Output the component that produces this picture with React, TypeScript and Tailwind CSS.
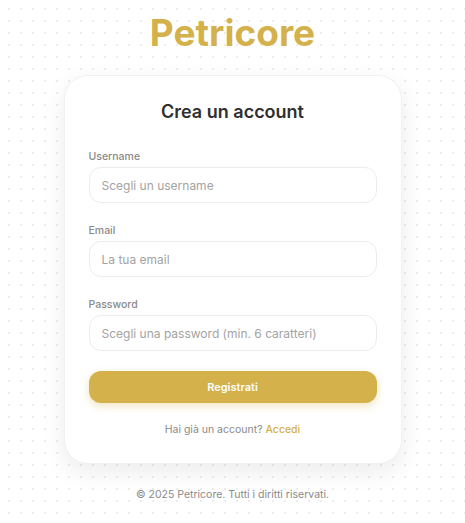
import React from 'react';

const Field = ({ label, type, placeholder }: { label: string; type: string; placeholder: string }) => (
  <div className="flex flex-col">
    <label className="mb-[2px] text-[10.5px] font-medium leading-4 text-[#8a8a8a]">{label}</label>
    <input
      type={type}
      placeholder={placeholder}
      className="h-9 rounded-xl border border-[#ececec] bg-white px-3 text-[12px] text-[#333] outline-none placeholder:text-[#a3a3a3]"
    />
  </div>
);

export default function App() {
  return (
    <div
      className="flex min-h-screen flex-col items-center bg-white bg-[radial-gradient(circle,#ececec_1px,transparent_1.2px)] bg-[length:12px_12px] bg-[position:3px_3px]"
      style={{ fontFamily: 'Inter, "Noto Sans", sans-serif' }}
    >
      {/* Brand */}
      <h1 className="mt-[13px] text-[37px] font-bold leading-10 text-[#d4b14a]">Petricore</h1>

      {/* Card */}
      <div className="mt-[22px] w-[338px] rounded-3xl border border-[#f1f1f1] bg-white px-6 pb-[25px] pt-[22px] shadow-[0_8px_24px_rgba(0,0,0,0.08)]">
        <h2 className="text-center text-lg font-semibold leading-7 text-[#2f2f2f]">Crea un account</h2>

        <form className="mt-[23px] flex flex-col gap-[20px]" onSubmit={(e) => e.preventDefault()}>
          <Field label="Username" type="text" placeholder="Scegli un username" />
          <Field label="Email" type="email" placeholder="La tua email" />
          <Field label="Password" type="password" placeholder="Scegli una password (min. 6 caratteri)" />

          <button
            type="submit"
            className="h-8 rounded-xl bg-[#d4b14a] text-[11px] font-semibold text-white shadow-[0_3px_8px_rgba(212,177,74,0.35)]"
          >
            Registrati
          </button>
        </form>

        <p className="mt-[19px] text-center text-[10.5px] leading-4 text-[#8a8a8a]">
          Hai già un account? <a href="#" className="font-medium text-[#d4b14a]">Accedi</a>
        </p>
      </div>

      <footer className="mt-[23px] text-[10.5px] leading-4 text-[#8a8a8a]">© 2025 Petricore. Tutti i diritti riservati.</footer>
    </div>
  );
}
